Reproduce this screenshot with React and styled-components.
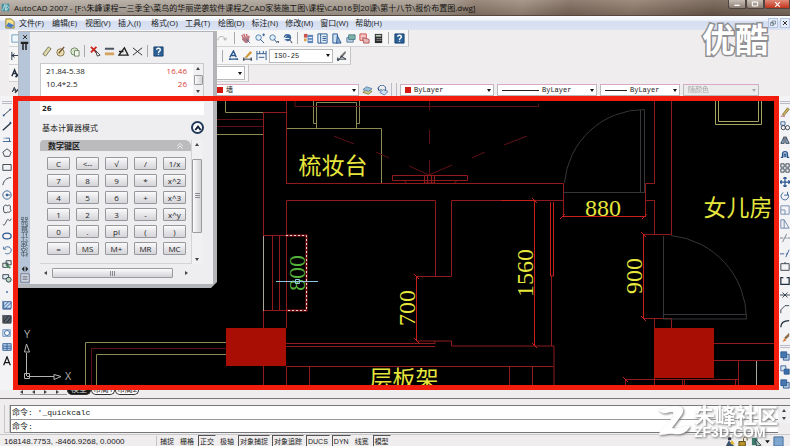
import React from "react";
import styled, { createGlobalStyle, css } from "styled-components";

const UI = `"Open Sans", "Noto Sans CJK SC", sans-serif`;
const MONO = `"Liberation Mono", "Noto Sans CJK SC", monospace`;

const GlobalStyle = createGlobalStyle`
  *, *::before, *::after { box-sizing: border-box; }
  body { margin: 0; background: #efedee; }
  button, input, select { font: inherit; color: inherit; margin: 0; }
`;

const Window = styled.div`
  position: relative;
  display: flex;
  flex-direction: column;
  min-height: 100vh;
  overflow: hidden;
  background: #efedee;
  color: #222;
  font: 8px/10px ${UI};
  white-space: nowrap;
`;

/* ---------- title and menu ---------- */
const TitleBar = styled.header`
  display: flex;
  align-items: center;
  justify-content: space-between;
  height: 16px;
  flex: none;
  padding-left: 1px;
  border-bottom: 1px solid #55473f;
  background: linear-gradient(#ffffff22, #00000022),
    linear-gradient(100deg, #b5aca2 0%, #aaa095 34%, #a69a8d 55%, #8a7869 60%, #9a897a 66%, #7d6a5b 72%, #8f7c6c 80%, #6f5c4e 90%, #7d6c60 100%);
`;
const TitleText = styled.h1`
  display: flex;
  align-items: center;
  gap: 4px;
  margin: 0;
  font: 8px/14px ${UI};
  color: #141210;
`;
const WindowButtons = styled.div`
  display: flex;
  align-self: flex-start;
`;
const WindowButton = styled.button`
  display: grid;
  place-items: center;
  width: ${(p) => (p.$close ? 26 : 18)}px;
  height: 9px;
  padding: 0;
  border: 1px solid #4f4540;
  border-top: 0;
  border-radius: 0 0 0 3px;
  background: ${(p) => (p.$close ? "linear-gradient(#e08a78, #c2331c)" : "linear-gradient(#c8beb6, #8d7e73)")};
`;
const MenuBar = styled.nav`
  display: flex;
  align-items: center;
  height: 14px;
  flex: none;
  padding-left: 4px;
  background: linear-gradient(#fafbfe, #f0f3fa 30%, #d5def0 40%, #dbe3f3);
`;
const MenuItem = styled.button`
  padding: 0;
  margin-right: 7px;
  border: 0;
  background: none;
  min-width: 26px;
  text-align: left;
  line-height: 12px;
`;
const MdiButtons = styled.div`
  display: flex;
  gap: 2px;
  margin-left: auto;
`;
const MdiButton = styled.button`
  display: grid;
  place-items: center;
  width: 10px;
  height: 10px;
  padding: 0;
  border: 1px solid #b5c6e0;
  background: #e3ecf8;
`;

/* ---------- toolbars ---------- */
const Toolbars = styled.section`
  display: flex;
  flex-direction: column;
  flex: none;
`;
const ToolRow = styled.div`
  display: flex;
  align-items: ${(p) => (p.$low ? "flex-end" : "center")};
  height: ${(p) => p.$h}px;
  padding-left: 9px;
`;
const ToolGroup = styled.div`
  display: flex;
  align-items: center;
  align-self: stretch;
  gap: ${(p) => p.$gap || 2}px;
  padding-right: 3px;
  border-right: 1px solid #c5c5c7;
  border-bottom: 1px solid #d2d2d4;
  background: #f7f6f7;
`;
const Covered = styled.span`
  width: ${(p) => p.$w}px;
  flex: none;
`;
const IconButton = styled.button`
  display: grid;
  place-items: center;
  width: 12px;
  height: 12px;
  flex: none;
  padding: 0;
  border: 0;
  background: none;
`;
const Divider = styled.span`
  width: 1px;
  height: 12px;
  margin: 0 2px;
  background: #a9a9ad;
`;
const Combo = styled.label`
  position: relative;
  display: flex;
  align-items: center;
  gap: 3px;
  height: ${(p) => p.$h || 12}px;
  width: ${(p) => p.$w}px;
  flex: none;
  padding: 0 2px 0 4px;
  border: 1px solid #b9b9bd;
  border-top-color: ${(p) => (p.$pink ? "#d9a9c4" : "#b9b9bd")};
  background: ${(p) => (p.$off ? "#ececec" : "#fff")};
  color: ${(p) => (p.$off ? "#888" : "#222")};
  font: 7px/10px ${MONO};
  &::after {
    content: "";
    border: 2px solid transparent;
    border-top: 3px solid ${(p) => (p.$off ? "#aaa" : "#111")};
    border-bottom: 0;
  }
`;
const ComboSelect = styled.select`
  appearance: none;
  flex: 1;
  min-width: 0;
  padding: 0;
  border: 0;
  background: none;
  outline: 0;
`;
const Swatch = styled.i`
  width: 6px;
  height: 6px;
  background: #d01a12;
`;
const Sample = styled.i`
  width: ${(p) => p.$w}px;
  height: 1px;
  background: #222;
`;
const Grip = styled.span`
  width: 6px;
  height: 13px;
  margin: 0 3px;
  border: solid #b9bcc4;
  border-width: 0 1px;
`;

/* ---------- workspace ---------- */
const Workspace = styled.main`
  display: flex;
  flex: 1 0 auto;
`;
const ToolColumn = styled.aside`
  display: flex;
  flex-direction: column;
  justify-content: space-between;
  align-items: center;
  width: ${(p) => p.$w}px;
  flex: none;
  padding: 5px 0 ${(p) => p.$bottom}px;
  overflow: hidden;
  background: #f3f2f4;
`;
const ColumnGrip = styled.span`
  width: 10px;
  height: 3px;
  border: solid #b9bcc4;
  border-width: 1px 0;
`;
const Viewport = styled.div`
  position: relative;
  display: flex;
  flex: 1;
  min-width: 0;
  background: #000;
  &::after {
    content: "";
    position: absolute;
    inset: 0;
    z-index: 3;
    border: 5px solid #f21d0c;
    pointer-events: none;
  }
`;
const Plan = styled.svg`
  display: block;
  width: 100%;
  height: auto;
`;

/* ---------- calculator palette ---------- */
const Palette = styled.section`
  position: absolute;
  z-index: 2;
  left: 18px;
  top: 31px;
  display: flex;
  padding: 1px 4px 4px 1px;
  background: #b3b5b8;
  clip-path: polygon(0 0, 100% 0, 100% calc(100% - 6px), calc(100% - 6px) 100%, 0 100%);
`;
const PaletteRail = styled.div`
  display: flex;
  flex-direction: column;
  align-items: center;
  width: 11px;
  padding: 1px 0;
  background: #b6c6d8;
`;
const RailTitle = styled.h2`
  margin: auto 0 8px;
  font: 8px/10px ${UI};
  color: #4d5a68;
  writing-mode: vertical-rl;
  transform: rotate(180deg);
`;
const PaletteBody = styled.div`
  display: flex;
  flex-direction: column;
  width: 183px;
  padding: 9px 9px 6px 10px;
  background: #eeedef;
`;
const PaletteTools = styled.div`
  display: flex;
  align-items: center;
  gap: 2px;
  height: 20px;
  margin-bottom: 2px;
`;
const History = styled.div`
  display: flex;
  height: 34px;
  border: 1px solid #c9c9cc;
  background: #fff;
`;
const HistoryTable = styled.table`
  flex: 1;
  border-collapse: collapse;
  align-self: flex-start;
  td { height: 13px; padding: 0 6px 0 5px; line-height: 12px; }
  td + td { text-align: right; color: #d8433a; }
`;
const VScroll = styled.div`
  display: flex;
  flex-direction: column;
  align-items: center;
  justify-content: space-between;
  width: 10px;
  padding: 3px 0;
  background: #f1f0f2;
`;
const Arrow = styled.i`
  border: 2px solid transparent;
  ${(p) =>
    ({
      up: css`border-bottom: 3px solid #444; border-top: 0;`,
      down: css`border-top: 3px solid #444; border-bottom: 0;`,
      left: css`border-right: 3px solid #444; border-left: 0;`,
      right: css`border-left: 3px solid #444; border-right: 0;`,
    })[p.$dir]}
`;
const Thumb = styled.i`
  display: grid;
  place-items: center;
  width: ${(p) => p.$w}px;
  height: ${(p) => p.$h}px;
  border: 1px solid #9b9ca0;
  border-radius: 1px;
  background: linear-gradient(${(p) => (p.$w > p.$h ? "180deg" : "90deg")}, #fbfbfc, #d3d3d7);
`;
const Ridges = styled.i`
  width: 5px;
  height: 5px;
  background: repeating-linear-gradient(${(p) => (p.$across ? "90deg" : "180deg")}, #8a8b90 0 1px, transparent 1px 2px);
`;
const Entry = styled.input`
  width: 100%;
  height: 13px;
  margin-top: 5px;
  padding: 0 2px;
  border: 0;
  background: #fff;
  outline: 0;
  font: bold 7px/12px "DejaVu Sans", sans-serif;
`;
const ModeRow = styled.div`
  display: flex;
  align-items: center;
  justify-content: space-between;
  height: 25px;
  padding-left: 2px;
`;
const RoundButton = styled.button`
  display: grid;
  place-items: center;
  width: 13px;
  height: 13px;
  padding: 0;
  border: 2px solid #24395c;
  border-radius: 50%;
  background: #fff;
`;
const PadArea = styled.div`
  display: flex;
`;
const Pad = styled.div`
  width: 152px;
  border-right: 1px solid #d4d4d8;
  border-bottom: 1px solid #d4d4d8;
`;
const PadHeader = styled.h3`
  display: flex;
  align-items: center;
  justify-content: space-between;
  height: 11px;
  margin: 0;
  padding: 0 7px 0 8px;
  border-radius: 4px 6px 0 0;
  background: #bbbbbd;
  font: bold 8px/10px ${UI};
`;
const Keys = styled.div`
  display: grid;
  grid-template-columns: repeat(5, 23px);
  gap: 4px 6px;
  padding: 6px 0 8px 7px;
`;
const Key = styled.button`
  height: 13px;
  padding: 0;
  border: 1px solid #97989c;
  border-radius: 1px;
  background: linear-gradient(#fafafb, #e6e6e9 50%, #d5d5d9);
  font: 8px/10px ${UI};
`;
const HScroll = styled.div`
  display: flex;
  align-items: center;
  justify-content: space-between;
  width: 152px;
  height: 10px;
  margin-top: 4px;
  padding: 0 4px;
`;

/* ---------- footer ---------- */
const TabStrip = styled.div`
  display: flex;
  align-items: flex-end;
  height: 9px;
  flex: none;
  padding: 0 0 3px 20px;
  border-bottom: 1px solid #77787a;
  overflow: hidden;
`;
const TabMoves = styled.div`
  display: flex;
  gap: 9px;
  padding-right: 8px;
  border-bottom: 1px solid #999;
`;
const Tab = styled.button`
  height: 11px;
  width: 24px;
  padding: 0;
  border: 1px solid #333;
  border-top: 0;
  border-radius: 0 0 5px 5px;
  background: ${(p) => (p.$on ? "#161616" : "#fbfbfb")};
  color: ${(p) => (p.$on ? "#ddd" : "#222")};
  line-height: 10px;
`;
const CommandArea = styled.section`
  display: flex;
  flex: none;
  padding: 6px 0 1px 4px;
`;
const CommandGrip = styled.span`
  width: 6px;
  border: solid #c6c6c9;
  border-width: 0 1px 1px;
`;
const CommandLines = styled.div`
  flex: 1;
  min-width: 0;
  border: 1px solid #77787a;
  border-right: 0;
  font: 8px/13px ${MONO};
  background: #fff;
`;
const CommandLog = styled.div`
  height: 14px;
  padding-left: 1px;
  border-bottom: 1px solid #98989a;
`;
const CommandPrompt = styled.label`
  display: flex;
  height: 12px;
  padding-left: 1px;
`;
const CommandInput = styled.input`
  flex: 1;
  padding: 0 4px;
  border: 0;
  background: none;
  outline: 0;
`;
const CommandScroll = styled(VScroll)`
  width: 12px;
  border-top: 1px solid #77787a;
  height: 18px;
`;
const StatusBar = styled.footer`
  display: flex;
  align-items: center;
  height: 13px;
  flex: none;
  padding-left: 4px;
  border-top: 1px solid #c9c9cb;
  overflow: hidden;
`;
const Coordinates = styled.output`
  width: 153px;
  height: 11px;
  border-right: 1px solid #c4c4c6;
  font: 8px/12px "Liberation Sans", sans-serif;
`;
const Toggle = styled.button`
  height: 12px;
  margin: 0 1px;
  padding: 0 1px;
  border: 1px solid ${(p) => (p.$on ? "#555" : "transparent")};
  border-right-color: transparent;
  border-bottom: 0;
  background: none;
  font: 7px/10px "Liberation Sans", "Noto Sans CJK SC", sans-serif;
`;
const Tray = styled.div`
  display: flex;
  align-items: center;
  gap: 2px;
  margin-left: auto;
  padding-right: 6px;
`;

/* ---------- watermarks ---------- */
const VideoMark = styled.strong`
  position: absolute;
  z-index: 4;
  right: 22px;
  top: 18px;
  font: bold 33px/40px "Noto Sans CJK SC", sans-serif;
  color: #fff;
  -webkit-text-stroke: 3px #8f8f93;
  paint-order: stroke fill;
`;
const SiteMark = styled.div`
  position: absolute;
  z-index: 4;
  right: 12px;
  bottom: 9px;
  display: flex;
  align-items: center;
  gap: 2px;
  color: #fff;
  filter: drop-shadow(1px 1px 1px #777);
`;
const SiteName = styled.div`
  display: flex;
  flex-direction: column;
  font: bold 21px/24px "Noto Sans CJK SC", sans-serif;
`;
const SiteUrl = styled.span`
  font: bold 14px/12px "Liberation Sans", sans-serif;
`;

/* ---------- icon drawings, on a 12-unit grid ---------- */
const B = "#28578f";
const K = "#23303f";
const shapes = {
  app: <><path d="M1 1h10v10H1z" fill="#3f8ea0" /><path d="M2 10 5 2l1 8M7 2v8M7 2l3 4-3 4" stroke="#d8f0ef" fill="none" /></>,
  doc: <><path d="M2 1h6l3 3v7H2z" fill="#f6e18d" stroke="#8f7a30" /><path d="M5 5 11 8 8 11 2 9z" fill="#4a7cc0" /></>,
  page: <path d="M2 2h9v8H2z" fill="#eef6fb" stroke="#6d9cbd" />,
  redo: <path d="M2 8c0-5 7-6 8-1M8 6l2 2 2-3" stroke="#aaa" fill="none" />,
  pan: <><path d="M2 2l2 4M4 1l2 4M7 1l1 4M10 3 9 6" stroke="#c4646c" strokeWidth="1.500" /><path d="M3 5h7v3l-2 3H6L2 7z" fill="#b07780" /><path d="m7 7 4 4" stroke="#4d74a0" /></>,
  zoomIn: <><circle cx="5" cy="5" r="3" fill="#dff0fb" stroke="#5277a0" /><path d="m7 7 4 4M9 2h3M10.500 .5v3" stroke={B} /></>,
  zoomWin: <><circle cx="5" cy="5" r="3" fill="#dff0fb" stroke="#5277a0" /><path d="m7 7 3 4" stroke={B} /><path d="M9 9h3v2z" fill={K} /></>,
  zoomBack: <><circle cx="6" cy="5" r="4" fill="#3a669c" /><path d="M2 6h6M5 3 2 6l3 3" stroke="#fff" fill="none" /><path d="m9 8 2 3" stroke={K} /></>,
  props: <><path d="M1 1h4v4H1z" fill="#cc5050" /><path d="M5 2h6v9H5z" fill="#5f88bd" /><path d="M1 6h3v3H1z" fill="#d7a24a" /><path d="M6 5h4M6 8h4" stroke="#fff" /></>,
  center: <><path d="M1 1h10v10H1z" fill="#e8f2fb" stroke={B} /><path d="M4 1v10M6 4h4M6 6h4M6 8h4" stroke={B} /></>,
  palettes: <><path d="M2 1h5v10H2z" fill="#cfe0f2" stroke={B} /><path d="m7 3 4 8H6z" fill="#87a9cf" stroke={B} /></>,
  sheets: <><path d="M2 5h7v5H2z" fill="#b9cfe0" stroke="#5b7fa0" /><path d="M4 2h7v5H4z" fill="#7fb3a8" stroke="#4b7c8c" /></>,
  markup: <><path d="M1 1h7v7H1z" fill="#f6c9c6" stroke="#cc4b46" /><path d="m4 5 7 2v4H5z" fill="#e8b6b4" stroke="#a55" /></>,
  calc: <><path d="M2 1h8v10H2z" fill="#2b2b2e" /><path d="M3 2h6v2H3z" fill="#b9c8b0" /><path d="M4 6h1m1 0h1m1 0h1M4 8h1m1 0h1m1 0h1" stroke="#ddd" /></>,
  help: <><path d="M1 1h10v10H1z" fill="#2c6197" stroke="#17406c" /><path d="M4 4c0-2 4-2 4 0S6 5.500 6 7.500M6 8.500v1" stroke="#fff" strokeWidth="1.500" fill="none" /></>,
  dimLin: <path d="M2 2v9M2 6h10M5 4 2 6l3 2" stroke={K} fill="none" />,
  dimText: <path d="m2 8 4-7 3 7M4 6h4M1 10h10M2 9v2M10 9v2" stroke={B} strokeWidth="1.500" fill="none" />,
  dimEdit: <><path d="m3 8 6-7 2 2-6 6z" fill="#cf9a3b" /><path d="M1 10h10M2 8v4M10 8v4" stroke={K} /></>,
  dimBreak: <path d="M1 1v10M11 1v10M1 4h10M3 8h6M4 1v3M8 1v3" stroke={B} fill="none" />,
  dimStyle: <><path d="m4 7 6-6 1 2-5 6z" fill="#777" /><path d="M1 10h10M2 8v4l4-5 5 3" stroke={K} fill="none" /></>,
  textStyle: <><path d="m2 9 3-7 3 7M3 6h4" stroke={K} strokeWidth="1.500" fill="none" /><path d="m6 10 5-5" stroke={K} strokeWidth="2" /></>,
  layers: <><path d="m1 8 4-3 6 2-4 3z" fill="#d8cf86" stroke="#87804a" /><path d="m1 5 4-3 6 2-4 3z" fill="#9cc0d8" stroke="#5e88a8" /></>,
  layerBack: <><path d="m3 8 4-3 5 2-4 4z" fill="#cfe0ef" stroke="#5b7fa8" /><path d="M2 6a4 4 0 1 1 7 0M2 6l-1-3M2 6l3-1" stroke={B} fill="none" /></>,
  line: <><path d="m2 10 8-7" stroke={K} fill="none" /><path d="M1 9h2v2H1zM9 2h2v2H9z" fill={B} /></>,
  xline: <><path d="m1 11 10-9" stroke={K} strokeWidth="1.500" /><path d="M9 1h2v2H9z" fill={B} /></>,
  pline: <path d="M1 9h8V5H4M2 5h1M8 9h3" stroke={B} fill="none" />,
  polygon: <path d="m6 1 5 4-2 5H3L1 5z" stroke={K} fill="none" />,
  rect: <path d="M1 3h10v7H1z" stroke={K} fill="none" />,
  arc: <path d="M1 11C2 5 6 2 11 2" stroke={K} fill="none" />,
  circle: <><circle cx="6" cy="6" r="5" stroke={B} fill="none" /><path d="M6 6h4M5 5h2v2H5z" stroke={B} fill={B} /></>,
  cloud: <path d="M3 2c2-2 3 1 4 0s4-1 3 2 2 3 0 5-3 0-4 1-4 1-4-2-1-4 1-6z" stroke={K} fill="none" />,
  spline: <path d="M1 9c3 3 4-6 6-6s2 4 4-1" stroke={K} fill="none" />,
  ellipse: <><ellipse cx="6" cy="6" rx="5" ry="3.500" stroke={B} strokeWidth="1.500" fill="none" /></>,
  ellArc: <path d="M3 4c3-4 9-1 8 3s-5 4-7 3M2 2v3h3" stroke={B} fill="none" />,
  insert: <><path d="M1 5h6v5H1zM5 2h6v5H5z" stroke={K} fill="#e3efe4" /><path d="m5 7 5 4" stroke="#3c8750" strokeWidth="2" /></>,
  block: <><path d="M1 2h7v5H1z" stroke={K} fill="#e2edf5" /><circle cx="8" cy="8" r="3" stroke={K} fill="#b9d6bd" /></>,
  point: <path d="M5 5h2v2H5z" fill={B} />,
  hatch: <><path d="M2 2h9v8H2z" fill="#c9dcf0" stroke={B} /><path d="m2 8 6-6M4 10l7-7M1 1v10h10" stroke={B} fill="none" /></>,
  gradient: <><path d="M2 2h9v8H2z" fill="#59616d" stroke={K} /><path d="m2 9 6-7M6 10l5-6M1 1v10h10" stroke="#222" fill="none" /></>,
  region: <><path d="M1 2h9v8H1z" fill="#d5e5f4" stroke="#6489b5" /><circle cx="6" cy="6" r="3" fill="#fff" stroke={B} /></>,
  table: <><path d="M1 2h10v8H1z" fill="#b8d0ec" stroke={B} /><path d="M1 5h10M1 7.500h10M6 2v8" stroke={B} /></>,
  mtext: <path d="m2 11 4-10 4 10M3.500 8h5" stroke="#181818" strokeWidth="1.500" fill="none" />,
  erase: <><path d="m3 9 6-8 2 2-6 7z" fill="#d5b85c" stroke="#7c6a31" /><path d="M1 11h5" stroke="#a44" /></>,
  copy: <><path d="M1 1h5v4H1z" fill="none" stroke={B} /><circle cx="4" cy="8" r="2.500" stroke={K} fill="none" /><circle cx="9" cy="8" r="2.500" stroke={K} fill="none" /></>,
  mirror: <><path d="M5 2v8H1zM7 2v8h4z" fill="#9dbad8" stroke={K} /></>,
  offset: <path d="M1 10h2V6a3 3 0 0 1 6 0v4h2M5 10V6h2v4" stroke={B} strokeWidth="1.500" fill="none" />,
  array: <path d="M1 1h4v4H1zM7 1h4v4H7zM1 7h4v4H1zM7 7h4v4H7z" stroke={K} fill="none" />,
  move: <path d="M6 0v12M0 6h12M4 2l2-2 2 2M4 10l2 2 2-2M2 4 0 6l2 2M10 4l2 2-2 2" stroke={B} strokeWidth="1.500" fill="none" />,
  rotate: <path d="M4 2a4.500 4.500 0 1 0 5 1M9 1v4H5" stroke={B} fill="none" />,
  scale: <path d="M1 1h10v10H1zM1 6h5v5" stroke="#6684ad" fill="none" />,
  stretch: <path d="M1 1h4v10H1zM5 1l6 10H5" stroke="#5e7ba2" fill="none" />,
  trim: <path d="M0 6h4M6 6h2M9 6h3M3 11 8 1" stroke="#6a7684" fill="none" />,
  extend: <path d="M0 7h5M7 7h2M7 11l4-9" stroke={B} fill="none" />,
  break1: <path d="M1 2h10v8H1zM5 1h2" stroke={K} fill="none" />,
  break2: <path d="M4 2H1v8h10V2H8" stroke={K} strokeWidth="1.500" fill="none" />,
  join: <path d="M0 6h12M3 3l3 3-3 3M9 3 6 6l3 3" stroke={K} fill="none" />,
  chamfer: <path d="M1 11V7l5-5h5" stroke={K} fill="none" />,
  fillet: <path d="M1 11c0-6 4-8 10-8" stroke={K} strokeWidth="1.500" fill="none" />,
  explode: <><path d="m5 7 6-6v4L7 9z" fill="#8b6a4c" /><path d="m1 5 4 3-2 4 5-2" fill="#e07b2e" /></>,
  front: <><path d="M4 4h7v7H4z" fill="#b7cbe0" stroke={B} /><path d="M1 1h7v7H1z" fill="#4777ae" stroke={B} /></>,
  back: <><path d="M1 1h6v6H1z" fill="#dbe6f1" stroke={B} /><path d="M5 5h6v6H5z" fill="#3c6da8" stroke={B} /></>,
  eraser: <><path d="m2 9 6-8 3 2-6 8z" fill="#ddd9a8" stroke="#77735a" /></>,
  sphere: <><circle cx="6" cy="7" r="4" fill="#eadfae" stroke="#80704d" /><path d="m4 8 6-7" stroke="#704c2e" strokeWidth="1.500" /></>,
  paste: <><circle cx="6" cy="6" r="4" fill="#d9e6cd" stroke="#6d8664" /><path d="M6 5h5v6H6z" fill="#f4f7ef" stroke="#6d8664" /></>,
  pick: <><path d="m1 1 6 6M7 1 1 7" stroke="#cc261e" strokeWidth="2" /><path d="m6 5 5 5-3 1z" fill="#fff" stroke="#333" /></>,
  dist: <><path d="M1 3h10" stroke="#4d5661" strokeWidth="2" /><path d="M1 7h10v3H1z" fill="#d3a25b" /></>,
  angle: <path d="m1 10 6-8 4 8zM1 6h5" stroke="#222" strokeWidth="1.500" fill="none" />,
  cross: <path d="m1 2 10 8M1 10l10-8" stroke="#222" fill="none" />,
  close: <path d="m3 3 6 6M9 3 3 9" stroke="#333" strokeWidth="1.500" />,
  pin: <path d="M1 1h10v3H9v8H7V4H5v8H3V4H1z" fill="#222" />,
  min: <path d="M2 8h8" stroke="#fff" strokeWidth="2" />,
  max: <path d="M2 3h8v6H2z" stroke="#fff" strokeWidth="1.500" fill="none" />,
  closeW: <path d="m2 2 8 8M10 2l-8 8" stroke="#fff" strokeWidth="2" />,
  restore: <path d="M4 2h7v6H4zM1 5h6v6H1z" stroke="#345" fill="none" />,
  chevrons: <path d="m2 6 4-4 4 4M2 10l4-4 4 4" stroke="#eee" strokeWidth="1.500" fill="none" />,
  up: <path d="m2 9 4-5 4 5" stroke="#16233a" strokeWidth="3" fill="none" />,
  swap: <path d="M5 2v8L1 6zM7 2v8l4-4z" fill="#222" />,
  menu: <><path d="M1 1h10v10H1z" fill="#dce4ee" stroke="#667" /><path d="M3 4h6M3 6h6M3 8h6" stroke="#667" /></>,
  person: <><circle cx="5" cy="3" r="2" fill="#334" /><path d="M1 11 4 5l6 6z" fill="#3a4f6b" /><path d="m7 4 4 5H6z" fill="#e2b830" /></>,
  lock: <><path d="M1 6h7v5H1z" fill="#b8932d" stroke="#5d4a12" /><path d="M6 6V3a2 2 0 0 1 4 0v2" stroke="#5d4a12" fill="none" /></>,
  plotter: <><path d="M1 2h6v8H1z" fill="#3d7a6b" /><path d="m5 4 6 6-5 1z" fill="#9ac4b0" stroke="#345" /></>,
  clean: <path d="M1 1h10v10H1z" fill="#7ea6cf" stroke="#3f689a" />,
  drop: <path d="M2 4h8l-4 5z" fill="#111" />,
};
const IconSvg = styled.svg`
  display: block;
  flex: none;
`;
const Icon = ({ name, size = 11 }) => (
  <IconSvg width={size} height={size} viewBox="0 0 12 12" aria-hidden="true">{shapes[name]}</IconSvg>
);
const Tool = ({ name, size }) => (
  <IconButton type="button" aria-label={name}><Icon name={name} size={size} /></IconButton>
);

const menus = ["文件(F)", "编辑(E)", "视图(V)", "插入(I)", "格式(O)", "工具(T)", "绘图(D)", "标注(N)", "修改(M)", "窗口(W)", "帮助(H)"];
const drawTools = ["line", "xline", "pline", "polygon", "rect", "arc", "circle", "cloud", "spline", "ellipse", "ellArc", "insert", "block", "point", "hatch", "gradient", "region", "table", "mtext"];
const editTools = ["erase", "copy", "mirror", "offset", "array", "move", "rotate", "scale", "stretch", "trim", "extend", "break1", "break2", "join", "chamfer", "fillet", "explode"];
const keys = ["C", "<--", "√", "/", "1/x", "7", "8", "9", "*", "x^2", "4", "5", "6", "+", "x^3", "1", "2", "3", "-", "x^y", "0", ".", "pi", "(", ")", "=", "MS", "M+", "MR", "MC"];
const toggles = [["捕捉"], ["栅格"], ["正交", 1], ["极轴"], ["对象捕捉", 1], ["对象追踪", 1], ["DUCS", 1], ["DYN", 1], ["线宽"], ["模型", 1]];

/* ---------- floor plan ---------- */
const PlanText = styled.text`
  font: 24px "Liberation Serif", "Noto Sans CJK SC", serif;
  fill: ${(p) => (p.$green ? "#55b03a" : "#e6e63c")};
  text-anchor: middle;
`;
const RoomText = styled(PlanText)`
  font: 23px "Noto Sans CJK SC", sans-serif;
`;
const AxisText = styled(PlanText)`
  font: 10px "Liberation Sans", sans-serif;
  fill: #aaa;
`;

const FloorPlan = () => (
  <Plan viewBox="13 96 766 294" preserveAspectRatio="xMidYMid slice" role="img" aria-label="报价布置图" fill="none">
    <g stroke="#8d8a55">
      <path d="M225.500 100v12.500h38M217 134.500h46.500" />
      <path d="M313.500 100v23.500h3M359.500 100v23.500h-3M316.500 128v-25.500h40v25.500M286 128.500h95.500v55" />
      <path d="M715.500 100v24.500h46V100M718.500 100v21.500h40V100" stroke="#a5a460" />
      <path d="M85.500 385v-42.500h141M96.500 385v-30.500h130" />
    </g>
    <g stroke="#5f1016">
      <path d="M217 119.500h46M217 126.500h46M295 100v6.500h243.500v-3M91.500 385v-36.500h135" />
      <path d="M429.500 97v13M429.500 130v14M429.500 160v14" />
      <path d="m334 136 20 8M376 152l13 6M409 166l20 9 23-10M472 158l13-6M504 145l23-9" />
    </g>
    <g stroke="#911a1c">
      <path d="M263.500 112.500v216M286.500 100v83.500M263.500 112.500h23M286.500 328V200.500h149v76M451.500 276V200.500H563" />
      <path d="M286 183.500h277.500v33M263.500 235.500h23M263.500 310.500h23M272.500 236v74M279.500 236v74" />
      <path d="M416.500 276.500h35M416.500 276v65h35v5h102.500v39M286 343.500h149v-2.500M286 346.500h149" />
      <path d="M286 366.500h267.500M263.500 366v19M286.500 366v19M309.500 366v19M509.500 366v19M532.500 366v19" />
      <path d="M654.500 100v83.500h-9v33M671.500 100v134.500h-28M645 200.500h9.500v34M643.500 318.500h28v10M654.500 318v10" />
      <path d="M551.500 276v70M714 343.500h60M714 360.500h60M738.500 360v25M654.500 378v7" />
      <path d="M625.500 385v-5.500h113M682.500 380v5M684.500 380v5M735.500 380v5" />
      <path d="M392.500 175.500h75v5h-75zM404 180.500l3 3M457 180.500l-3 3M424.500 176v7h10v-7M427.500 176v7M431.500 176v7" />
    </g>
    <g stroke="#c9201c">
      <path d="M562 216.500h84M534.500 200v146M643.500 234v85M416.500 276v65M501 200.500h34M550.500 202v74M553.500 202v74h-3" />
      <path d="m560 219 5-5M642 219l5-5M532 198l5 5M532 343l5 5M641 232l5 5M641 316l5 5M414 274l5 5M414 338l5 5M623 377l5 5" />
    </g>
    <path d="M226 328h60v38h-60zM654 328h60v50h-60z" fill="#a80e04" />
    <g stroke="#34363a">
      <path d="M564.500 183a80 80 0 0 1 80-73.500v83M640.500 110v82M563 192.500h82" />
      <path d="M671 235.500a84 84 0 0 1 75.500 83.500H663M663.500 236v83M663 314.500h83.500" />
    </g>
    <path d="M263.500 236v75M756.500 361v24" stroke="#aaa59b" />
    <path d="M286 235.500h20.500v75H286" stroke="#8d1a1c" strokeWidth="2" />
    <path d="M286 235.500h20.500v75H286" stroke="#f0d8d0" strokeDasharray="2 2" />
    <g stroke="#b5b5b5">
      <path d="M24.500 373.500h5v5h-5zM26.500 376v-23M27 376.500h27M26.500 344l-2 8h5zM61 376.500l-7-2v5z" />
    </g>
    <AxisText x="27" y="338">Y</AxisText>
    <AxisText x="68" y="380">X</AxisText>
    <RoomText x="333" y="174">梳妆台</RoomText>
    <RoomText x="738" y="216">女儿房</RoomText>
    <RoomText x="404" y="387">层板架</RoomText>
    <PlanText x="603" y="216">880</PlanText>
    <PlanText transform="translate(415 308) rotate(-90)">700</PlanText>
    <PlanText transform="translate(533 273) rotate(-90)">1560</PlanText>
    <PlanText transform="translate(642 276) rotate(-90)">900</PlanText>
    <PlanText $green transform="translate(305 273) rotate(-90)">800</PlanText>
    <path d="M276 281.500h42M295.500 279.500h4v4h-4z" stroke="#8ec4dc" />
  </Plan>
);

const Calculator = () => (
  <Palette>
    <PaletteRail>
      <Icon name="close" size={8} />
      <Icon name="pin" size={9} />
      <RailTitle>快速计算器</RailTitle>
      <Icon name="swap" size={8} />
      <Icon name="menu" size={10} />
    </PaletteRail>
    <PaletteBody>
      <PaletteTools>
        <Tool name="eraser" /><Tool name="sphere" /><Tool name="paste" />
        <Divider />
        <Tool name="pick" /><Tool name="dist" /><Tool name="angle" /><Tool name="cross" />
        <Divider />
        <Tool name="help" />
      </PaletteTools>
      <History>
        <HistoryTable>
          <tbody>
            <tr><td>21.84-5.38</td><td>16.46</td></tr>
            <tr><td>10.4*2.5</td><td>26</td></tr>
          </tbody>
        </HistoryTable>
        <VScroll>
          <Arrow $dir="up" /><Thumb $w={9} $h={10} /><Arrow $dir="down" />
        </VScroll>
      </History>
      <Entry defaultValue="26" aria-label="基本计算器模式" />
      <ModeRow>
        基本计算器模式
        <RoundButton type="button" aria-label="收起"><Icon name="up" size={8} /></RoundButton>
      </ModeRow>
      <PadArea>
        <Pad>
          <PadHeader>数字键区<Icon name="chevrons" size={8} /></PadHeader>
          <Keys>{keys.map((k) => <Key type="button" key={k}>{k}</Key>)}</Keys>
        </Pad>
        <VScroll>
          <Arrow $dir="up" />
          <Thumb $w={10} $h={74}><Ridges /></Thumb>
          <Covered $w={1} />
          <Arrow $dir="down" />
        </VScroll>
      </PadArea>
      <HScroll>
        <Arrow $dir="left" />
        <Thumb $w={121} $h={10}><Ridges $across /></Thumb>
        <Covered $w={1} />
        <Arrow $dir="right" />
      </HScroll>
    </PaletteBody>
  </Palette>
);

const Choice = ({ value, label, lead, ...rest }) => (
  <Combo {...rest}>
    {lead}
    <ComboSelect aria-label={label} disabled={rest.$off}><option>{value}</option></ComboSelect>
  </Combo>
);

export default function App() {
  return (
    <Window>
      <GlobalStyle />
      <TitleBar>
        <TitleText>
          <Icon name="app" size={9} />
          AutoCAD 2007 - [F:\朱峰课程一三季全\菜鸟的华丽逆袭软件课程之CAD家装施工图\课程\CAD16到20课\第十八节\报价布置图.dwg]
        </TitleText>
        <WindowButtons>
          <WindowButton type="button" aria-label="最小化"><Icon name="min" size={8} /></WindowButton>
          <WindowButton type="button" aria-label="还原"><Icon name="max" size={8} /></WindowButton>
          <WindowButton type="button" aria-label="关闭" $close><Icon name="closeW" size={7} /></WindowButton>
        </WindowButtons>
      </TitleBar>
      <MenuBar>
        <Icon name="doc" size={11} />
        <Covered $w={4} />
        {menus.map((m) => <MenuItem type="button" key={m}>{m}</MenuItem>)}
        <MdiButtons>
          <MdiButton type="button" aria-label="还原图形"><Icon name="restore" size={6} /></MdiButton>
          <MdiButton type="button" aria-label="关闭图形"><Icon name="close" size={8} /></MdiButton>
        </MdiButtons>
      </MenuBar>

      <Toolbars>
        <ToolRow $h={17}>
          <ToolGroup>
            <Tool name="page" /><Covered $w={190} /><Tool name="redo" /><Covered $w={1} />
            <Divider />
            <Tool name="pan" /><Tool name="zoomIn" /><Tool name="zoomWin" /><Tool name="zoomBack" />
            <Divider />
            <Tool name="props" /><Tool name="center" /><Tool name="palettes" /><Tool name="sheets" /><Tool name="markup" /><Tool name="calc" />
            <Divider />
            <Tool name="help" />
          </ToolGroup>
        </ToolRow>
        <ToolRow $h={18}>
          <ToolGroup>
            <Tool name="dimLin" /><Covered $w={195} />
            <Divider />
            <Tool name="dimText" /><Tool name="dimEdit" /><Tool name="dimBreak" />
            <Choice value="ISO-25" label="标注样式" $w={64} $h={14} />
            <Tool name="dimStyle" />
          </ToolGroup>
        </ToolRow>
        <ToolRow $h={17}>
          <ToolGroup>
            <Tool name="textStyle" /><Covered $w={144} />
            <Choice value="" label="文字样式" $w={76} $h={14} />
          </ToolGroup>
        </ToolRow>
        <ToolRow $h={14} $low>
          <Tool name="textStyle" size={8} />
          <Covered $w={191} />
          <Choice value="墙" label="图层" lead={<Swatch />} $w={147} $pink />
          <Covered $w={2} />
          <Tool name="layers" /><Covered $w={3} /><Tool name="layerBack" />
          <Grip />
          <Choice value="ByLayer" label="颜色" lead={<Swatch />} $w={94} $pink />
          <Covered $w={3} />
          <Choice value="ByLayer" label="线型" lead={<Sample $w={37} />} $w={100} $pink />
          <Covered $w={3} />
          <Choice value="ByLayer" label="线宽" lead={<Sample $w={22} />} $w={80} $pink />
          <Covered $w={3} />
          <Choice value="随颜色" label="打印样式" $w={76} $off $pink />
        </ToolRow>
      </Toolbars>

      <Workspace>
        <ToolColumn $w={13} $bottom={23}>
          <ColumnGrip />
          {drawTools.map((t) => <Tool key={t} name={t} size={10} />)}
        </ToolColumn>
        <Viewport><FloorPlan /></Viewport>
        <ToolColumn $w={11} $bottom={0}>
          <ColumnGrip />
          {editTools.map((t) => <Tool key={t} name={t} size={10} />)}
          <ColumnGrip />
          <Tool name="front" size={10} /><Tool name="back" size={10} /><Tool name="front" size={10} />
        </ToolColumn>
      </Workspace>
      <Calculator />

      <TabStrip>
        <TabMoves><Arrow $dir="left" /><Arrow $dir="left" /><Arrow $dir="right" /><Arrow $dir="right" /></TabMoves>
        <Tab type="button" $on>模型</Tab>
        <Tab type="button">布局1</Tab>
        <Tab type="button">布局2</Tab>
      </TabStrip>
      <CommandArea>
        <CommandGrip />
        <CommandLines>
          <CommandLog>命令: '_quickcalc</CommandLog>
          <CommandPrompt>命令:<CommandInput /></CommandPrompt>
        </CommandLines>
        <CommandScroll><Arrow $dir="up" /><Arrow $dir="down" /></CommandScroll>
      </CommandArea>
      <StatusBar>
        <Coordinates>168148.7753, -8466.9268, 0.0000</Coordinates>
        {toggles.map(([t, on]) => <Toggle type="button" key={t} $on={on}>{t}</Toggle>)}
        <Tray>
          <Icon name="person" /><Icon name="lock" /><Icon name="plotter" /><Icon name="drop" size={7} /><Icon name="clean" />
        </Tray>
      </StatusBar>

      <VideoMark>优酷</VideoMark>
      <SiteMark>
        <IconSvg width="36" height="33" viewBox="0 0 36 33" aria-hidden="true">
          <path d="M2 5C9 7 12 1 20 2c8 0 9 5 5 10l-9 12c6 2 11-3 18-2-3 7-9 9-16 8-6-1-9 1-15 1 0-5 6-7 10-13 3-4 5-7 4-10C12 7 7 13 2 5z" fill="#fff" />
        </IconSvg>
        <SiteName>朱峰社区<SiteUrl>ZF3D.COM</SiteUrl></SiteName>
      </SiteMark>
    </Window>
  );
}
